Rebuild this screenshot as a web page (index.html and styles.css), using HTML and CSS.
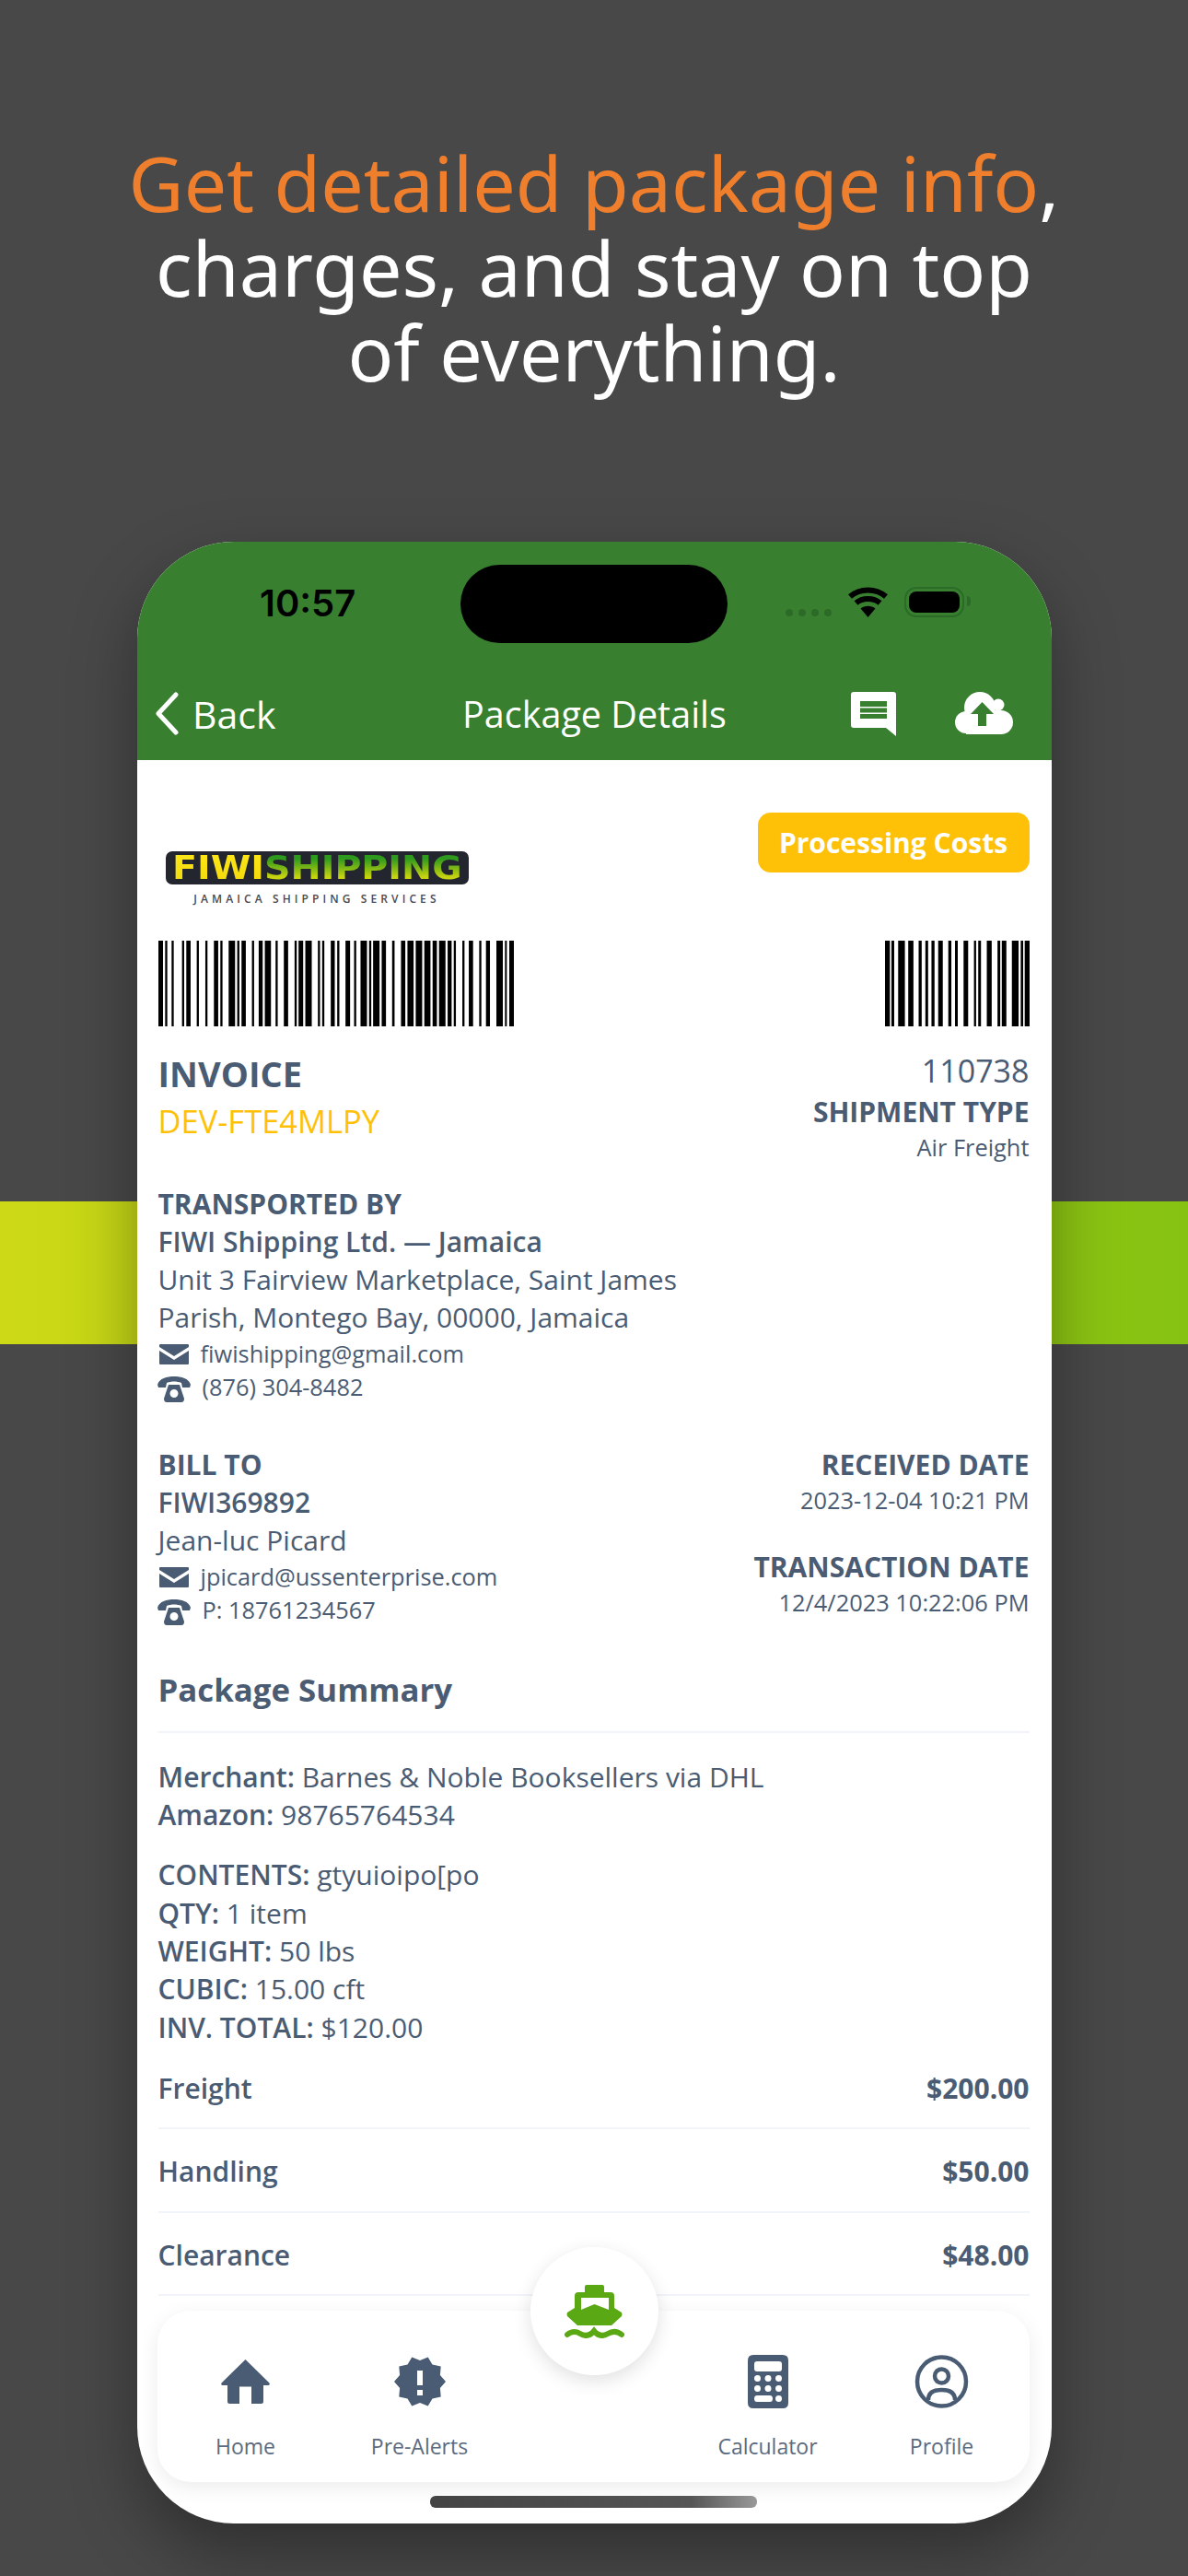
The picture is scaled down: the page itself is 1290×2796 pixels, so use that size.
FILE: index.html
```html
<!DOCTYPE html>
<html lang="en">
<head>
  <meta charset="UTF-8" />
  <meta name="viewport" content="width=device-width, initial-scale=1.0" />
  <title>Package Details - FIWI Shipping</title>
  <link rel="stylesheet" href="styles.css">
</head>
<body>
  <div class="banda"></div>

  <h1 class="titular"><span class="naranja">Get detailed package info</span>,<br>charges, and stay on top<br>of everything.</h1>

  <div class="telefono">
    <header class="cabecera">
      <div class="estado">
        <span class="hora">10:57</span>
        <div class="isla"></div>
        <div class="puntos"><i></i><i></i><i></i><i></i></div>
        <svg class="wifi" viewBox="0 0 45 33"><path d="M22.5 33 14.5 23.5C19 19.7 26 19.7 30.5 23.5Z"/><path d="M9.5 17.5C16.5 11.5 28.5 11.5 35.5 17.5M3 10.5C14 1 31 1 42 10.5" fill="none" stroke="#000" stroke-width="6"/></svg>
        <div class="bateria"><div></div></div>
      </div>
      <nav class="barra">
        <div class="volver">
          <svg class="chevron" viewBox="0 0 26 47"><path d="M23 3 4 23.5 23 44" fill="none" stroke="#fff" stroke-width="5" stroke-linecap="round" stroke-linejoin="round"/></svg>
          <span>Back</span>
        </div>
        <div class="barra-titulo">Package Details</div>
        <div class="barra-iconos">
          <svg class="ico-chat" viewBox="0 0 49 48"><path d="M3 0H46Q49 0 49 3V48L38 39H3Q0 39 0 36V3Q0 0 3 0Z" fill="#fff"/><path d="M10 10H39V16H10ZM10 17.5H39V22.5H10ZM10 24H39V29H10Z" fill="#388030"/></svg>
          <svg class="ico-nube" viewBox="0 0 63 46"><g fill="#fff"><circle cx="12" cy="33" r="12"/><circle cx="27" cy="17" r="17"/><circle cx="47" cy="14" r="6.5"/><circle cx="50" cy="33" r="13"/><rect x="12" y="20" width="38" height="26"/></g><path d="M29.5 11 17 24H25V37H34V24H42Z" fill="#388030"/></svg>
        </div>
      </nav>
    </header>

    <main class="contenido">
      <div class="fila-logo">
        <div class="logo">
          <div class="logo-marca"><div class="logo-letras"><span class="logo-fiwi">FIWI</span><span class="logo-ship">SHIPPING</span></div></div>
          <div class="logo-lema">JAMAICA SHIPPING SERVICES</div>
        </div>
        <div class="insignia">Processing Costs</div>
      </div>

      <div class="fila-barras">
        <svg class="barras-a" viewBox="33 0 1159 10" preserveAspectRatio="none"><path d="M33 0h15v10h-15zM55 0h7v10h-7zM76 0h7v10h-7zM110 0h7v10h-7zM124 0h14v10h-14zM158 0h7v10h-7zM186 0h7v10h-7zM214 0h14v10h-14zM235 0h7v10h-7zM262 0h21v10h-21zM290 0h7v10h-7zM304 0h14v10h-14zM338 0h7v10h-7zM360 0h13v10h-13zM380 0h20v10h-20zM415 0h7v10h-7zM442 0h14v10h-14zM477 0h7v10h-7zM490 0h15v10h-15zM512 0h21v10h-21zM553 0h7v10h-7zM567 0h7v10h-7zM595 0h13v10h-13zM616 0h7v10h-7zM643 0h15v10h-15zM671 0h7v10h-7zM692 0h21v10h-21zM720 0h7v10h-7zM733 0h21v10h-21zM761 0h14v10h-14zM795 0h8v10h-8zM824 0h14v10h-14zM845 0h20v10h-20zM872 0h21v10h-21zM900 0h20v10h-20zM927 0h14v10h-14zM948 0h21v10h-21zM976 0h13v10h-13zM996 0h7v10h-7zM1024 0h7v10h-7zM1045 0h14v10h-14zM1079 0h7v10h-7zM1101 0h13v10h-13zM1135 0h21v10h-21zM1163 0h6v10h-6zM1177 0h15v10h-15z"/></svg>
        <svg class="barras-b" viewBox="33 0 473 10" preserveAspectRatio="none"><path d="M33 0h16v10h-16zM54 0h9v10h-9zM76 0h22v10h-22zM109 0h17v10h-17zM143 0h10v10h-10zM165 0h9v10h-9zM185 0h10v10h-10zM207 0h15v10h-15zM240 0h10v10h-10zM262 0h9v10h-9zM290 0h15v10h-15zM324 0h7v10h-7zM338 0h9v10h-9zM366 0h16v10h-16zM401 0h9v10h-9zM415 0h15v10h-15zM448 0h22v10h-22zM477 0h8v10h-8zM490 0h16v10h-16z"/></svg>
      </div>

      <section class="fila-factura">
        <div>
          <div class="factura-titulo">INVOICE</div>
          <div class="factura-codigo">DEV-FTE4MLPY</div>
        </div>
        <div class="derecha">
          <div class="factura-numero">110738</div>
          <div class="rotulo rotulo-tipo">SHIPMENT TYPE</div>
          <div class="dato-chico">Air Freight</div>
        </div>
      </section>

      <section class="bloque-transporte">
        <div class="rotulo">TRANSPORTED BY</div>
        <div class="rotulo-normal">FIWI Shipping Ltd. — Jamaica</div>
        <div class="texto">Unit 3 Fairview Marketplace, Saint James</div>
        <div class="texto">Parish, Montego Bay, 00000, Jamaica</div>
        <div class="contacto">
          <svg class="ico-sobre" viewBox="0 0 32 22"><path d="M1 0H31Q32 0 32 1V3L16 13 0 3V1Q0 0 1 0ZM0 7 16 17 32 7V21Q32 22 31 22H1Q0 22 0 21Z"/></svg>
          <span>fiwishipping@gmail.com</span>
        </div>
        <div class="contacto">
          <svg class="ico-tel" viewBox="0 0 36 28"><path fill-rule="evenodd" d="M0 9C2 2 10 0 18 0S34 2 36 9L35 12H27L26 7C21 5 15 5 10 7L9 12H1ZM12 9H24L29 24Q29 28 26 28H10Q7 28 7 24ZM18 14A4.5 4.5 0 1 0 18.01 23 4.5 4.5 0 1 0 18 14Z"/></svg>
          <span>(876) 304-8482</span>
        </div>
      </section>

      <section class="fila-cliente">
        <div>
          <div class="rotulo">BILL TO</div>
          <div class="rotulo-normal">FIWI369892</div>
          <div class="texto">Jean-luc Picard</div>
          <div class="contacto contacto-primero">
            <svg class="ico-sobre" viewBox="0 0 32 22"><path d="M1 0H31Q32 0 32 1V3L16 13 0 3V1Q0 0 1 0ZM0 7 16 17 32 7V21Q32 22 31 22H1Q0 22 0 21Z"/></svg>
            <span>jpicard@ussenterprise.com</span>
          </div>
          <div class="contacto">
            <svg class="ico-tel" viewBox="0 0 36 28"><path fill-rule="evenodd" d="M0 9C2 2 10 0 18 0S34 2 36 9L35 12H27L26 7C21 5 15 5 10 7L9 12H1ZM12 9H24L29 24Q29 28 26 28H10Q7 28 7 24ZM18 14A4.5 4.5 0 1 0 18.01 23 4.5 4.5 0 1 0 18 14Z"/></svg>
            <span>P: 18761234567</span>
          </div>
        </div>
        <div class="derecha">
          <div class="rotulo">RECEIVED DATE</div>
          <div class="dato-chico">2023-12-04 10:21 PM</div>
          <div class="rotulo rotulo-fecha">TRANSACTION DATE</div>
          <div class="dato-chico">12/4/2023 10:22:06 PM</div>
        </div>
      </section>

      <h2 class="resumen-titulo">Package Summary</h2>

      <section class="resumen-grupo">
        <div class="texto"><b>Merchant:</b> Barnes &amp; Noble Booksellers via DHL</div>
        <div class="texto"><b>Amazon:</b> 98765764534</div>
      </section>

      <section class="resumen-grupo resumen-segundo">
        <div class="texto"><b>CONTENTS:</b> gtyuioipo[po</div>
        <div class="texto"><b>QTY:</b> 1 item</div>
        <div class="texto"><b>WEIGHT:</b> 50 lbs</div>
        <div class="texto"><b>CUBIC:</b> 15.00 cft</div>
        <div class="texto"><b>INV. TOTAL:</b> $120.00</div>
      </section>

      <div class="cargo"><span>Freight</span><b>$200.00</b></div>
      <div class="cargo"><span>Handling</span><b>$50.00</b></div>
      <div class="cargo"><span>Clearance</span><b>$48.00</b></div>
    </main>

    <div class="menu">
      <div class="menu-item">
        <svg class="ico-casa" viewBox="0 0 53 48"><path d="M26.5 0 52.5 25.5Q53.5 28 51 28H46V45.5Q46 48 43.5 48H33V29.5H20V48H9.5Q7 48 7 45.5V28H2Q-.5 28 .5 25.5Z"/></svg>
        <span>Home</span>
      </div>
      <div class="menu-item">
        <svg class="ico-alerta" viewBox="0 0 56 54"><path fill-rule="evenodd" d="M28 4 36.7.4 41.5 8.4 50.7 10.5 49.9 19.9 56 27 49.9 34.1 50.7 43.5 41.5 45.6 36.7 53.6 28 50 19.3 53.6 14.5 45.6 5.3 43.5 6.1 34.1 0 27 6.1 19.9 5.3 10.5 14.5 8.4 19.3.4ZM25 15V31H31V15ZM25 36V42H31V36Z"/></svg>
        <span>Pre-Alerts</span>
      </div>
      <div class="menu-item"></div>
      <div class="menu-item">
        <svg class="ico-calc" viewBox="0 0 44 58"><path fill-rule="evenodd" d="M6 0H38Q44 0 44 6V52Q44 58 38 58H6Q0 58 0 52V6Q0 0 6 0ZM10 7Q7 7 7 10V15Q7 18 10 18H34Q37 18 37 15V10Q37 7 34 7ZM10.5 22A3.5 3.5 0 1 0 10.51 29 3.5 3.5 0 1 0 10.5 22ZM22 22A3.5 3.5 0 1 0 22.01 29 3.5 3.5 0 1 0 22 22ZM33.5 22A3.5 3.5 0 1 0 33.51 29 3.5 3.5 0 1 0 33.5 22ZM10.5 33A3.5 3.5 0 1 0 10.51 40 3.5 3.5 0 1 0 10.5 33ZM22 33A3.5 3.5 0 1 0 22.01 40 3.5 3.5 0 1 0 22 33ZM33.5 33A3.5 3.5 0 1 0 33.51 40 3.5 3.5 0 1 0 33.5 33ZM10 44Q7 44 7 47.5 7 51 10 51H24Q27 51 27 47.5 27 44 24 44ZM33.5 44A3.5 3.5 0 1 0 33.51 51 3.5 3.5 0 1 0 33.5 44Z"/></svg>
        <span>Calculator</span>
      </div>
      <div class="menu-item">
        <svg class="ico-perfil" viewBox="0 0 59 58"><g fill="none" stroke="#4a5c73" stroke-width="4.5"><circle cx="29.5" cy="29" r="26.5"/><circle cx="29.5" cy="23" r="7.5"/><path d="M15 49C15 41 21 38 29.5 38S44 41 44 49"/></g></svg>
        <span>Profile</span>
      </div>
    </div>

    <div class="boton-barco">
      <svg class="ico-barco" viewBox="0 0 65 58"><path fill="#5aa813" fill-rule="evenodd" d="M24 0H41Q43 0 43 2V8H50Q54 8 54 12V25L62 30Q63 32 62 34L51 44H14L3 34Q2 32 3 30L11 25V12Q11 8 15 8H22V2Q22 0 24 0ZM18 14V27L32.5 21 48 27V14Z"/><path d="M3 54C8 50 12 50 17 53 22 56 27 56 32 50 37 56 42 56 47 53 52 50 57 50 62 54" fill="none" stroke="#5aa813" stroke-width="6" stroke-linecap="round"/></svg>
    </div>
    <div class="barra-inicio"></div>
  </div>
</body>
</html>
```

FILE: styles.css
```css
* {
  box-sizing: border-box;
}

html, body {
  margin: 0;
  height: 2796px;
  overflow: hidden;
}

body {
  position: relative;
  background-color: #484848;
  font-family: 'Open Sans', sans-serif;
  color: #4a5c73;
  padding-top: 152px;
}

.banda {
  position: absolute;
  top: 1304px;
  left: 0;
  width: 100%;
  height: 155px;
  background: linear-gradient(90deg, #cdd916, #85c212);
}

.titular {
  position: relative;
  margin: 0;
  font-family: 'Noto Sans', sans-serif;
  font-size: 82.5px;
  font-weight: 400;
  line-height: 92px;
  text-align: center;
  color: #fff;
}

.naranja {
  color: #f07f2d;
}

.telefono {
  position: relative;
  width: 993px;
  height: 2151px;
  margin: 160px 0 0 149px;
  background: #fff;
  border-radius: 105px;
  overflow: hidden;
  box-shadow: 0 30px 70px rgba(0,0,0,0.35);
}

.cabecera {
  height: 237px;
  background: #388030;
  color: #fff;
}

.estado {
  display: flex;
  align-items: flex-start;
  height: 110px;
  padding: 25px 0 0 133px;
}

.hora {
  width: 218px;
  margin-top: 19px;
  font-family: 'Inter', sans-serif;
  font-size: 40px;
  font-weight: 600;
  line-height: 46px;
  color: #000;
}

.isla {
  width: 290px;
  height: 85px;
  background: #000;
  border-radius: 43px;
}

.puntos {
  display: flex;
  gap: 6px;
  margin: 48px 0 0 63px;
}

.puntos i {
  width: 8px;
  height: 8px;
  border-radius: 50%;
  background: #2c6a28;
}

.wifi {
  width: 45px;
  height: 33px;
  margin: 24px 0 0 17px;
}

.bateria {
  position: relative;
  width: 65px;
  height: 33px;
  margin: 24px 0 0 17px;
  padding: 3px;
  border: 2px solid #2c6a28;
  border-radius: 13px;
}

.bateria div {
  height: 100%;
  background: #000;
  border-radius: 8px;
}

.bateria::after {
  content: '';
  position: absolute;
  top: 8px;
  right: -9px;
  width: 4px;
  height: 11px;
  background: #2c6a28;
  border-radius: 0 4px 4px 0;
}

.barra {
  display: grid;
  grid-template-columns: 1fr auto 1fr;
  align-items: center;
  height: 127px;
  padding: 26px 19px 0;
}

.volver {
  display: flex;
  align-items: center;
  gap: 15px;
  font-size: 41px;
}

.chevron {
  width: 26px;
  height: 47px;
}

.barra-titulo {
  font-size: 39.5px;
}

.barra-iconos {
  display: flex;
  justify-content: flex-end;
  align-items: flex-start;
  gap: 64px;
  padding-right: 23px;
}

.ico-chat {
  width: 49px;
  height: 48px;
}

.ico-nube {
  width: 63px;
  height: 46px;
}

.contenido {
  padding: 0 24.5px 0 22.5px;
}

.fila-logo {
  display: flex;
  justify-content: space-between;
  align-items: flex-start;
  height: 139px;
  padding-top: 57px;
}

.logo {
  margin: 42px 0 0 8px;
  width: 329px;
}

.logo-marca {
  height: 36px;
  padding-left: 7px;
  background: #23262e;
  border-radius: 7px;
}

.logo-letras {
  font-family: 'DejaVu Sans', sans-serif;
  font-size: 35px;
  font-weight: 700;
  line-height: 36px;
  white-space: nowrap;
  transform: scaleX(1.13);
  transform-origin: left;
}

.logo-fiwi {
  background: linear-gradient(#ffe81a, #f0d80a);
  -webkit-background-clip: text;
  background-clip: text;
  color: transparent;
}

.logo-ship {
  background: linear-gradient(#2e9a1d 25%, #c8d40f 75%);
  -webkit-background-clip: text;
  background-clip: text;
  color: transparent;
}

.logo-lema {
  margin-top: 9px;
  font-size: 12px;
  font-weight: 600;
  line-height: 13px;
  letter-spacing: 4.1px;
  text-align: center;
  white-space: nowrap;
  color: #4a4a52;
}

.insignia {
  width: 295px;
  height: 65px;
  background: #ffc107;
  border-radius: 14px;
  font-size: 30px;
  font-weight: 700;
  line-height: 65px;
  text-align: center;
  color: #fff;
}

.fila-barras {
  display: flex;
  justify-content: space-between;
  margin-top: 57px;
}

.barras-a {
  width: 386px;
  height: 93px;
}

.barras-b {
  width: 157px;
  height: 93px;
}

.fila-factura {
  display: flex;
  justify-content: space-between;
  margin-top: 26px;
}

.derecha {
  text-align: right;
}

.factura-titulo {
  font-size: 38px;
  font-weight: 700;
  line-height: 50px;
}

.factura-codigo {
  font-size: 34.5px;
  line-height: 54px;
  color: #ffc107;
}

.factura-numero {
  font-size: 34px;
  line-height: 44px;
}

.rotulo {
  font-size: 30px;
  font-weight: 700;
  line-height: 41px;
}

.rotulo-tipo {
  margin-top: 2px;
}

.rotulo-fecha {
  margin-top: 34px;
}

.rotulo-normal {
  font-size: 30px;
  font-weight: 600;
  line-height: 41px;
}

.dato-chico {
  font-size: 25.4px;
  line-height: 36px;
}

.bloque-transporte {
  margin-top: 23px;
}

.texto {
  font-size: 30px;
  line-height: 41.3px;
}

.texto b {
  font-weight: 600;
}

.contacto {
  display: flex;
  align-items: center;
  height: 36px;
  font-size: 25.4px;
}

.contacto-primero {
  margin-top: 1px;
}

.contacto svg {
  fill: #4a5c73;
  flex: none;
}

.ico-sobre {
  width: 32px;
  height: 22px;
  margin: 3px 13px 0 1px;
}

.ico-tel {
  width: 36px;
  height: 28px;
  margin: 6px 13px 0 -1px;
}

.fila-cliente {
  display: flex;
  justify-content: space-between;
  margin-top: 46px;
}

.resumen-titulo {
  margin: 44px 0 0;
  padding-bottom: 20px;
  border-bottom: 2px solid #f1f5f9;
  font-size: 34.8px;
  font-weight: 700;
  line-height: 50px;
}

.resumen-grupo {
  margin-top: 27px;
}

.resumen-segundo {
  margin-top: 24px;
}

.cargo {
  display: flex;
  justify-content: space-between;
  padding: 25px 0 22.5px;
  border-bottom: 2px solid #f1f5f9;
  font-size: 30px;
  line-height: 41px;
}

.cargo span {
  font-weight: 600;
}

.cargo b {
  font-weight: 700;
}

.menu {
  position: absolute;
  top: 1920px;
  left: 22px;
  display: grid;
  grid-template-columns: repeat(5, 189px);
  width: 947px;
  height: 186px;
  padding: 48px 1px 0;
  background: #fff;
  border-radius: 36px;
  box-shadow: 0 6px 22px rgba(0,0,0,0.08);
}

.menu-item {
  display: flex;
  flex-direction: column;
  align-items: center;
  font-size: 23px;
  line-height: 30px;
  color: #5b6b80;
}

.menu-item svg {
  fill: #4a5c73;
  height: 58px;
  margin-bottom: 26px;
}

.ico-casa {
  width: 53px;
  padding: 5px 0;
}

.ico-alerta {
  width: 56px;
  padding: 2px 0;
}

.ico-calc {
  width: 44px;
}

.ico-perfil {
  width: 59px;
}

.boton-barco {
  position: absolute;
  top: 1851px;
  left: 427px;
  display: flex;
  justify-content: center;
  align-items: center;
  width: 139px;
  height: 139px;
  background: #fff;
  border-radius: 50%;
  box-shadow: 0 6px 20px rgba(0,0,0,0.12);
}

.ico-barco {
  width: 65px;
  height: 58px;
}

.barra-inicio {
  position: absolute;
  top: 2121px;
  left: 318px;
  width: 355px;
  height: 13px;
  background: linear-gradient(90deg, #444, #555 80%, #999);
  border-radius: 6px;
}
```
